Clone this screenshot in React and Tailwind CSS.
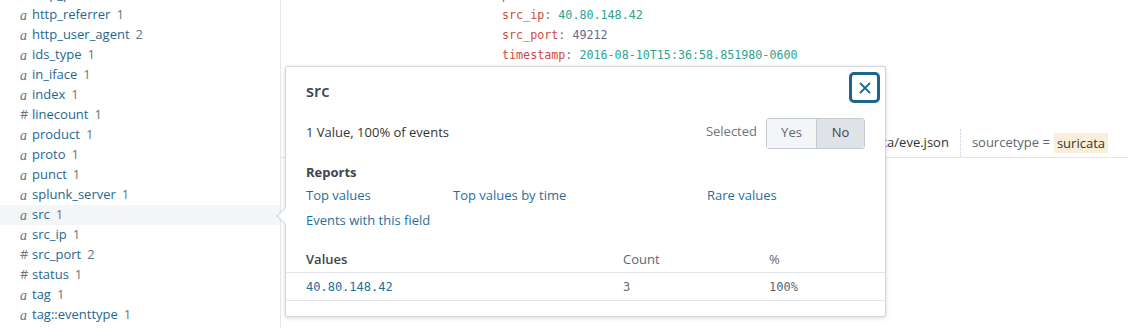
import React from "react";

const fields = [
  ["a", "http_protocol", 1],
  ["a", "http_referrer", 1],
  ["a", "http_user_agent", 2],
  ["a", "ids_type", 1],
  ["a", "in_iface", 1],
  ["a", "index", 1],
  ["#", "linecount", 1],
  ["a", "product", 1],
  ["a", "proto", 1],
  ["a", "punct", 1],
  ["a", "splunk_server", 1],
  ["a", "src", 1],
  ["a", "src_ip", 1],
  ["#", "src_port", 2],
  ["#", "status", 1],
  ["a", "tag", 1],
  ["a", "tag::eventtype", 1],
];

const sans = "font-['Open_Sans','Lato',sans-serif]";
const mono = "font-['DejaVu_Sans_Mono','Liberation_Mono',monospace]";

function Sidebar() {
  return (
    <div className="w-[281px] shrink-0 border-r border-[#e1e6eb] overflow-hidden">
      <div className="-mt-[15px]">
        {fields.map(([t, name, n]) => (
          <div
            key={name}
            className={`h-[20px] flex items-center pl-[20px] text-[13px] ${
              name === "src" ? "bg-[#f3f5f6]" : ""
            }`}
          >
            {t === "a" ? (
              <span className="w-[12px] text-[#6b7680] italic font-['Liberation_Serif',serif] text-[14px]">a</span>
            ) : (
              <span className="w-[12px] text-[#6b7680] text-[13px]">#</span>
            )}
            <span className="text-[#1f6790]">{name}</span>
            <span className="ml-[6px] text-[#6b7680]">{n}</span>
          </div>
        ))}
      </div>
    </div>
  );
}

function Main() {
  return (
    <div className="flex-1 overflow-hidden">
      <div className={`-mt-[15px] pl-[221px] text-[11.7px] ${mono}`}>
        <div className="h-[20px] leading-[20px]">
          <span className="text-[#cf4a3e]">proto</span>
          <span className="text-[#6b7680]">: </span>
          <span className="text-[#2ea38e]">TCP</span>
        </div>
        <div className="h-[20px] leading-[20px]">
          <span className="text-[#cf4a3e]">src_ip</span>
          <span className="text-[#6b7680]">: </span>
          <span className="text-[#2ea38e]">40.80.148.42</span>
        </div>
        <div className="h-[20px] leading-[20px]">
          <span className="text-[#cf4a3e]">src_port</span>
          <span className="text-[#6b7680]">: </span>
          <span className="text-[#6a6890]">49212</span>
        </div>
        <div className="h-[21px] leading-[21px]">
          <span className="text-[#cf4a3e]">timestamp</span>
          <span className="text-[#6b7680]">: </span>
          <span className="text-[#2ea38e]">2016-08-10T15:36:58.851980-0600</span>
        </div>
      </div>
      <div className={`mt-[67px] flex justify-end items-center pr-[20px] h-[20px] text-[13px] text-[#5c6773] ${sans}`}>
        <span>source = </span>
        <span className="ml-[4px] text-[#333]">/var/log/suricata/eve.json</span>
        <span className="mx-[11px] h-[28px] border-l border-dotted border-[#c3cbd4]"></span>
        <span>sourcetype = </span>
        <span className="ml-[4px] px-[3px] bg-[#fcefd9] text-[#333] leading-[20px]">suricata</span>
      </div>
      <div className="mt-[4px] border-b border-[#e1e6eb]"></div>
    </div>
  );
}

function Popup() {
  return (
    <div
      className={`absolute left-[285px] top-[66px] w-[601px] h-[251px] bg-white border border-[#d0d5da] rounded-[2px] shadow-[0_1px_4px_rgba(0,0,0,0.15)] ${sans} text-[13px] text-[#333]`}
    >
      <div className="absolute -left-[7px] top-[143px] w-[12px] h-[12px] bg-white border-l border-b border-[#d0d5da] rotate-45"></div>
      <div className="relative px-[20px]">
        <div className="flex justify-between h-[44px]">
          <div className="mt-[13px] text-[16.5px] leading-[22px] font-semibold text-[#3c444d]">src</div>
          <button className="mt-[5px] -mr-[15px] w-[31px] h-[31px] rounded-[5px] border-[3px] border-[#1d6490] flex items-center justify-center bg-white">
            <svg width="12" height="12" viewBox="0 0 12 12">
              <path d="M1.5 1.5 L10.5 10.5 M10.5 1.5 L1.5 10.5" stroke="#1d6a96" strokeWidth="1.8" strokeLinecap="round" />
            </svg>
          </button>
        </div>
        <div className="mt-[6px] h-[32px] flex items-center justify-between">
          <div className="text-[#333]">1 Value, 100% of events</div>
          <div className="flex items-center">
            <span className="text-[#6b7680] mr-[9px] -mt-[3px]">Selected</span>
            <div className="flex h-[31px] border border-[#c3cbd4] rounded-[3px] overflow-hidden">
              <div className="w-[50px] flex items-center justify-center bg-[#f3f5f6] text-[#5c6773] border-r border-[#c3cbd4]">Yes</div>
              <div className="w-[47px] flex items-center justify-center bg-[#dfe3e7] text-[#3c444d]">No</div>
            </div>
          </div>
        </div>
        <div className="mt-[13px] h-[20px] leading-[20px] font-bold text-[#3c444d]">Reports</div>
        <div className="mt-[3px] grid grid-cols-[147px_254px_1fr] gap-y-[5px] leading-[20px] text-[#1f6e9c]">
          <div>Top values</div>
          <div>Top values by time</div>
          <div>Rare values</div>
          <div className="col-span-3">Events with this field</div>
        </div>
      </div>
      <div className="mt-[17px]">
        <div className="grid grid-cols-[337px_146px_1fr] h-[26px] items-center border-b border-[#e1e6eb]">
          <div className="pl-[20px] font-semibold text-[#3c444d]">Values</div>
          <div className="text-[#5c6773]">Count</div>
          <div className="text-[#5c6773]">%</div>
        </div>
        <div className={`grid grid-cols-[337px_146px_1fr] h-[28px] items-center border-b border-[#e1e6eb] text-[12px] ${mono}`}>
          <div className="pl-[20px] text-[#1f6e9c]">40.80.148.42</div>
          <div className="text-[#5c6773]">3</div>
          <div className="text-[#5c6773]">100%</div>
        </div>
      </div>
    </div>
  );
}

export default function App() {
  return (
    <div className={`relative w-[1128px] h-[328px] overflow-hidden bg-white flex ${sans}`}>
      <Sidebar />
      <Main />
      <Popup />
    </div>
  );
}
